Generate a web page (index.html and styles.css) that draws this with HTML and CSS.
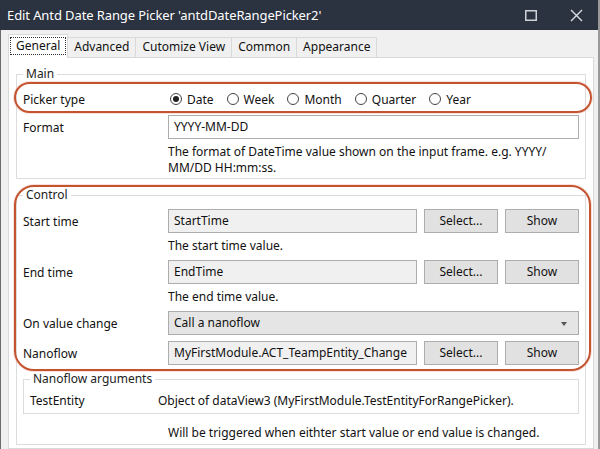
FILE: index.html
```html
<!DOCTYPE html>
<html>
<head>
<meta charset="utf-8">
<link rel="stylesheet" href="styles.css">
</head>
<body>
<div class="window">
  <div class="titlebar">
    <span class="title">Edit Antd Date Range Picker 'antdDateRangePicker2'</span>
    <div class="controls">
      <svg class="ico-max" width="12" height="11" viewBox="0 0 12 11"><rect x="0.75" y="0.75" width="10.5" height="9.5" fill="none" stroke="#cfd2d6" stroke-width="1.5"/></svg>
      <svg class="ico-close" width="13" height="13" viewBox="0 0 13 13"><path d="M1 1 L12 12 M12 1 L1 12" stroke="#dcdfe3" stroke-width="1.4" fill="none"/></svg>
    </div>
  </div>
  <div class="client">
    <div class="tabs">
      <div class="tab active"><span class="focus">General</span></div>
      <div class="tab">Advanced</div>
      <div class="tab">Cutomize View</div>
      <div class="tab">Common</div>
      <div class="tab">Appearance</div>
    </div>
    <div class="panel">
      <fieldset class="group main">
        <legend>Main</legend>
        <div class="row">
          <span class="label">Picker type</span>
          <div class="radios">
            <span class="radio checked"><span class="dot"></span>Date</span>
            <span class="radio"><span class="dot"></span>Week</span>
            <span class="radio"><span class="dot"></span>Month</span>
            <span class="radio"><span class="dot"></span>Quarter</span>
            <span class="radio"><span class="dot"></span>Year</span>
          </div>
        </div>
        <div class="row gap4">
          <span class="label">Format</span>
          <div class="field wide">YYYY-MM-DD</div>
        </div>
        <div class="desc two">The format of DateTime value shown on the input frame. e.g. YYYY/<br>MM/DD HH:mm:ss.</div>
      </fieldset>

      <fieldset class="group control">
        <legend>Control</legend>
        <div class="row">
          <span class="label">Start time</span>
          <div class="field ro">StartTime</div>
          <div class="btn">Select...</div>
          <div class="btn">Show</div>
        </div>
        <div class="desc">The start time value.</div>
        <div class="row gap5">
          <span class="label">End time</span>
          <div class="field ro">EndTime</div>
          <div class="btn">Select...</div>
          <div class="btn">Show</div>
        </div>
        <div class="desc">The end time value.</div>
        <div class="row gap5">
          <span class="label">On value change</span>
          <div class="select">Call a nanoflow<span class="caret"></span></div>
        </div>
        <div class="row gap6">
          <span class="label">Nanoflow</span>
          <div class="field ro">MyFirstModule.ACT_TeampEntity_Change</div>
          <div class="btn">Select...</div>
          <div class="btn">Show</div>
        </div>
        <fieldset class="group args">
          <legend>Nanoflow arguments</legend>
          <div class="argrow">
            <span class="argname">TestEntity</span>
            <span>Object of dataView3 (MyFirstModule.TestEntityForRangePicker).</span>
          </div>
        </fieldset>
        <div class="desc last">Will be triggered when eithter start value or end value is changed.</div>
      </fieldset>
    </div>
  </div>
</div>
<div class="hl hl-picker"></div>
<div class="hl hl-control"></div>
</body>
</html>
```

FILE: styles.css
```css
body {
  margin: 0;
  width: 600px;
  height: 449px;
  overflow: hidden;
  background: #9a9a9a;
  font-family: "Noto Sans", "Open Sans", sans-serif;
  font-size: 12px;
  color: #111;
  position: relative;
}

.window {
  width: 598px;
  height: 449px;
  background: #f0f0f0;
  display: flex;
  flex-direction: column;
  box-sizing: border-box;
  border-left: 1px solid #6b6b6b;
}

.titlebar {
  height: 30px;
  flex: none;
  background: #2b3240;
  color: #fff;
  display: flex;
  align-items: center;
  padding-left: 7px;
  font-size: 13px;
  margin-left: -1px;
}

.title {
  flex: 1;
  white-space: nowrap;
  letter-spacing: -0.1px;
}

.controls {
  display: flex;
  align-items: center;
  gap: 33px;
  padding-right: 15px;
}

.client {
  flex: 1;
  display: flex;
  flex-direction: column;
  padding-left: 7px;
  min-height: 0;
}

.tabs {
  height: 27px;
  flex: none;
  display: flex;
  align-items: flex-end;
}

.tab {
  height: 20px;
  box-sizing: border-box;
  border: 1px solid #d9d9d9;
  border-bottom: none;
  padding: 0 6px;
  line-height: 18px;
  margin-left: -1px;
  background: #f0f0f0;
  white-space: nowrap;
}

.tab.active {
  margin-left: 0;
  height: 24px;
  margin-bottom: -1px;
  background: #fff;
  position: relative;
  z-index: 1;
  padding: 2px 1px 0 1px;
  line-height: 16px;
}

.focus {
  display: inline-block;
  border: 1px dotted #333;
  padding: 0 5px;
}

.panel {
  width: 586px;
  flex: 1;
  box-sizing: border-box;
  background: #fff;
  border: 1px solid #d9d9d9;
  padding: 9px 7px 0 7px;
}

.group {
  margin: 0;
  border: 1px solid #dcdcdc;
  padding: 6px 6px 2px 6px;
  min-width: 0;
}

.group legend {
  padding: 0 3px;
  line-height: 14px;
  color: #222;
}

.control {
  margin-top: 9px;
  padding-top: 7px;
}

.row {
  display: grid;
  grid-template-columns: 138px 1fr 74px 74px;
  column-gap: 7px;
  height: 24px;
  align-items: center;
}

.row > .wide,
.row > .select,
.row > .radios {
  grid-column: 2 / 5;
}

.gap4 { margin-top: 4px; }
.gap5 { margin-top: 5px; }
.gap6 { margin-top: 6px; }

.field {
  height: 24px;
  box-sizing: border-box;
  border: 1px solid #adadad;
  background: #fff;
  padding-left: 5px;
  line-height: 22px;
  white-space: nowrap;
  overflow: hidden;
}

.field.ro {
  background: #f0f0f0;
}

.btn {
  height: 24px;
  box-sizing: border-box;
  border: 1px solid #adadad;
  background: #e1e1e1;
  text-align: center;
  line-height: 22px;
}

.select {
  height: 24px;
  box-sizing: border-box;
  border: 1px solid #acacac;
  background: #e5e5e5;
  padding-left: 5px;
  line-height: 22px;
  position: relative;
}

.caret {
  position: absolute;
  right: 11px;
  top: 10px;
  width: 0;
  height: 0;
  border-left: 3.5px solid transparent;
  border-right: 3.5px solid transparent;
  border-top: 4px solid #555;
}

.radios {
  display: flex;
  align-items: center;
  padding-left: 2px;
}

.radio {
  display: flex;
  align-items: center;
  margin-right: 13px;
}

.radio .dot {
  width: 12px;
  height: 12px;
  box-sizing: border-box;
  border: 1px solid #444;
  border-radius: 50%;
  margin-right: 5px;
  position: relative;
  background: #fff;
}

.radio.checked .dot::after {
  content: "";
  position: absolute;
  left: 2px;
  top: 2px;
  width: 6px;
  height: 6px;
  border-radius: 50%;
  background: #222;
}

.desc {
  margin-left: 145px;
  margin-top: 4px;
  line-height: 18px;
  white-space: nowrap;
}

.desc.two {
  margin-top: 5px;
  line-height: 16px;
}

.args {
  margin-top: 7px;
  padding: 4px 6px 3px 6px;
}

.argrow {
  display: flex;
  height: 20px;
  align-items: center;
}

.argname {
  width: 128px;
  flex: none;
}

.desc.last {
  margin-top: 10px;
}

.hl {
  position: absolute;
  box-sizing: border-box;
  border: 2px solid #c4532f;
  box-shadow: 0 0 0 1px rgba(235, 170, 150, 0.35);
}

.hl-picker {
  left: 14px;
  top: 82px;
  width: 578px;
  height: 31px;
  border-radius: 16px;
}

.hl-control {
  left: 14px;
  top: 185px;
  width: 577px;
  height: 186px;
  border-radius: 20px;
}
```
